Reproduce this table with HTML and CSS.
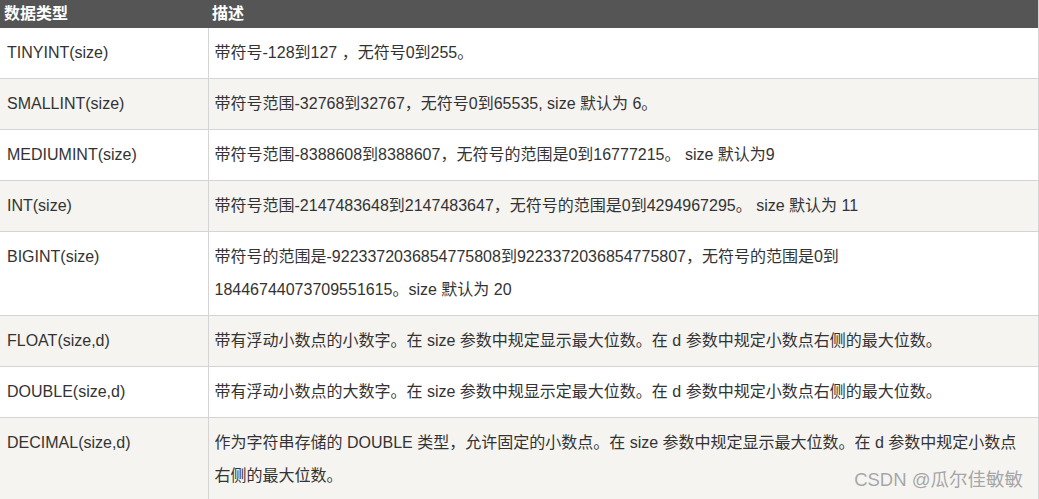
FILE: index.html
```html
<!DOCTYPE html>
<html lang="zh-CN">
<head>
<meta charset="utf-8">
<title>数据类型</title>
<link rel="stylesheet" href="styles.css">
</head>
<body>
<div class="page">
  <table class="types">
    <thead>
      <tr><th class="c1">数据类型</th><th class="c2">描述</th></tr>
    </thead>
    <tbody>
      <tr><td class="c1">TINYINT(size)</td><td class="c2">带符号-128到127 ，无符号0到255。</td></tr>
      <tr><td class="c1">SMALLINT(size)</td><td class="c2">带符号范围-32768到32767，无符号0到65535, size 默认为 6。</td></tr>
      <tr><td class="c1">MEDIUMINT(size)</td><td class="c2">带符号范围-8388608到8388607，无符号的范围是0到16777215。 size 默认为9</td></tr>
      <tr><td class="c1">INT(size)</td><td class="c2">带符号范围-2147483648到2147483647，无符号的范围是0到4294967295。 size 默认为 11</td></tr>
      <tr><td class="c1">BIGINT(size)</td><td class="c2">带符号的范围是-9223372036854775808到9223372036854775807，无符号的范围是0到18446744073709551615。size 默认为 20</td></tr>
      <tr><td class="c1">FLOAT(size,d)</td><td class="c2">带有浮动小数点的小数字。在 size 参数中规定显示最大位数。在 d 参数中规定小数点右侧的最大位数。</td></tr>
      <tr><td class="c1">DOUBLE(size,d)</td><td class="c2">带有浮动小数点的大数字。在 size 参数中规显示定最大位数。在 d 参数中规定小数点右侧的最大位数。</td></tr>
      <tr><td class="c1">DECIMAL(size,d)</td><td class="c2">作为字符串存储的 DOUBLE 类型，允许固定的小数点。在 size 参数中规定显示最大位数。在 d 参数中规定小数点右侧的最大位数。</td></tr>
    </tbody>
  </table>
  <div class="watermark">CSDN @瓜尔佳敏敏</div>
</div>
</body>
</html>
```

FILE: styles.css
```css
html, body {
  margin: 0;
  padding: 0;
  background: #ffffff;
}

.page {
  position: relative;
  width: 1039px;
  height: 499px;
  overflow: hidden;
  font-family: "Liberation Sans", "Noto Sans CJK SC", sans-serif;
  font-size: 16px;
  color: #333333;
}

.types {
  width: 1039px;
  border-collapse: collapse;
  table-layout: fixed;
  border-right: 1px solid #d4d4d4;
}

.types th {
  background: #555555;
  color: #ffffff;
  font-weight: bold;
  text-align: left;
  height: 28px;
  padding: 0 4px;
  line-height: 28px;
  box-sizing: border-box;
  vertical-align: middle;
}

.types th.c1 {
  width: 208px;
}

.types td {
  padding: 8px 6px 9px 6px;
  line-height: 33px;
  border-bottom: 1px solid #d4d4d4;
  vertical-align: top;
  text-align: left;
}

.types td.c1 {
  padding-left: 7px;
}

.types td.c2 {
  border-left: 1px solid #d4d4d4;
}

.types tbody tr:nth-child(even) td {
  background: #f5f4f1;
}

.watermark {
  position: absolute;
  right: 16px;
  top: 468px;
  font-size: 18.5px;
  line-height: 24px;
  color: #a6a6a6;
  text-shadow: 0 0 1px rgba(255, 255, 255, 0.8);
  white-space: nowrap;
}
```
